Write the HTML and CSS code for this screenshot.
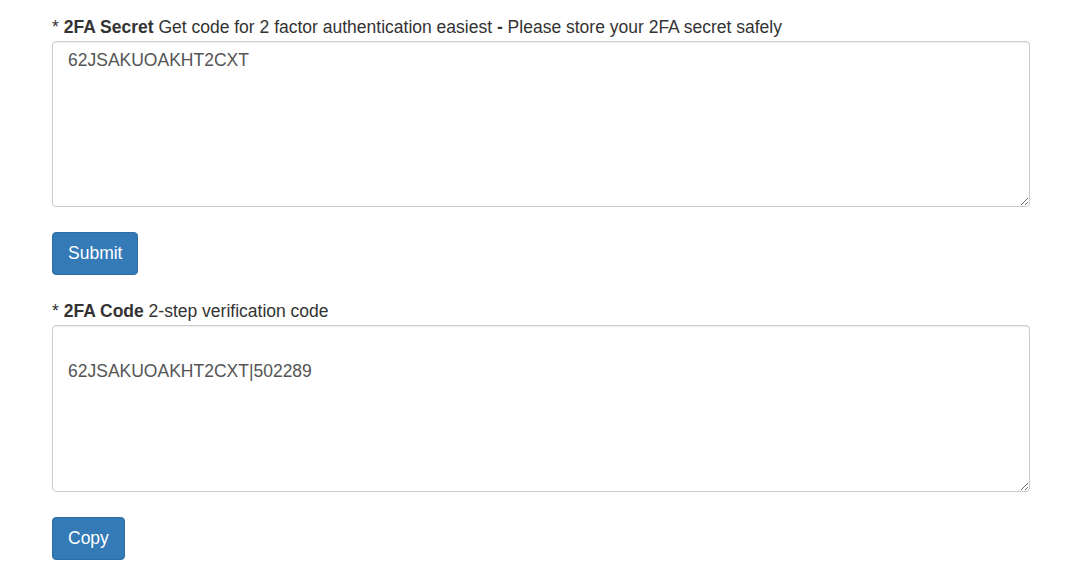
FILE: index.html
```html
<!DOCTYPE html>
<html>
<head>
<meta charset="utf-8">
<link rel="stylesheet" href="styles.css">
</head>
<body>
<div class="page">
  <div class="group">
    <label class="field-label" for="secret"><span class="req">*</span> <b>2FA Secret</b> Get code for 2 factor authentication easiest <b>-</b> Please store your 2FA secret safely</label>
    <textarea id="secret" class="field">62JSAKUOAKHT2CXT</textarea>
    <div class="actions"><button class="btn">Submit</button></div>
  </div>
  <div class="group">
    <label class="field-label" for="code"><span class="req">*</span> <b>2FA Code</b> 2-step verification code</label>
    <textarea id="code" class="field field-tall">

62JSAKUOAKHT2CXT|502289</textarea>
    <div class="actions"><button class="btn">Copy</button></div>
  </div>
</div>
</body>
</html>
```
FILE: styles.css
```css
html, body {
  margin: 0;
  padding: 0;
  background: #fff;
}
body {
  font-family: "Liberation Sans", Arial, sans-serif;
  font-size: 17.5px;
  line-height: 20px;
  color: #333;
}
.page {
  padding: 17px 62px 0 52px;
  display: flex;
  flex-direction: column;
  gap: 26px;
}
.group {
  display: flex;
  flex-direction: column;
}
.field-label {
  display: block;
  margin-bottom: 4px;
  font-weight: normal;
}
.field-label b {
  font-weight: bold;
}
.req {
  color: #333;
}
.field {
  display: block;
  box-sizing: border-box;
  width: 978px;
  height: 166px;
  padding: 4px 15px 3px;
  font-family: "Liberation Sans", Arial, sans-serif;
  font-size: 17.5px;
  line-height: 28px;
  color: #555;
  background: #fff;
  border: 1px solid #ccc;
  border-radius: 4px;
  box-shadow: inset 0 1px 1px rgba(0,0,0,.075);
  resize: vertical;
  outline: none;
}
.field-tall {
  height: 167px;
  padding-top: 3px;
}
.actions {
  margin-top: 25px;
  display: flex;
}
.btn {
  font-family: "Liberation Sans", Arial, sans-serif;
  font-size: 17.5px;
  line-height: 21px;
  padding: 10px 15px;
  color: #fff;
  background: #337ab7;
  border: 1px solid #2e6da4;
  border-radius: 4px;
  cursor: pointer;
}
```
